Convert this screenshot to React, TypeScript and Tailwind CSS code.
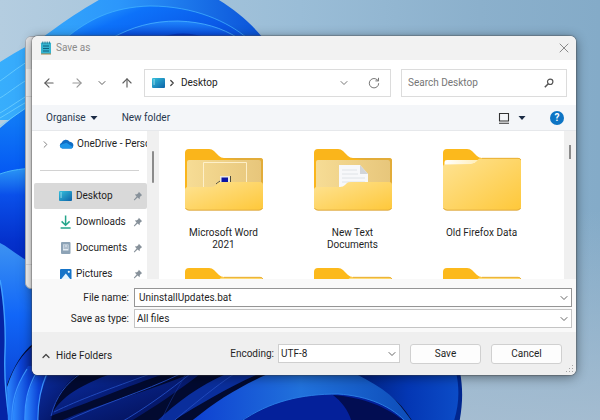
import {
  ArrowLeft,
  ArrowRight,
  ArrowUp,
  ChevronDown,
  ChevronRight,
  ChevronUp,
  X,
} from "lucide-react";
import { useState } from "react";

const Wallpaper = () => (
  <svg
    className="absolute inset-0 h-full w-full"
    viewBox="0 0 600 420"
    preserveAspectRatio="xMidYMid slice"
    aria-hidden="true"
  >
    <defs>
      <linearGradient id="sky" x1="0" y1="0" x2="1" y2="0">
        <stop offset="0" stopColor="#b4cde0" />
        <stop offset="0.5" stopColor="#9abdd7" />
        <stop offset="0.8" stopColor="#8bb0cc" />
        <stop offset="1" stopColor="#84abc8" />
      </linearGradient>
      <linearGradient id="haze" x1="0" y1="0" x2="0" y2="1">
        <stop offset="0.5" stopColor="#a9bfd2" stopOpacity="0" />
        <stop offset="1" stopColor="#a9bfd2" stopOpacity="0.85" />
      </linearGradient>
      <linearGradient id="petal" x1="0" y1="0" x2="1" y2="0">
        <stop offset="0" stopColor="#38aefc" />
        <stop offset="0.45" stopColor="#2c97fb" />
        <stop offset="1" stopColor="#0a52d8" />
      </linearGradient>
      <linearGradient id="petalInner" x1="0" y1="0" x2="1" y2="0.4">
        <stop offset="0" stopColor="#35b0ff" />
        <stop offset="0.4" stopColor="#0d72fa" />
        <stop offset="1" stopColor="#0a55e4" />
      </linearGradient>
      <linearGradient id="petalCore" x1="0" y1="0" x2="0" y2="1">
        <stop offset="0" stopColor="#1f85fb" />
        <stop offset="1" stopColor="#0443dd" />
      </linearGradient>
      <linearGradient id="deep" x1="0" y1="0" x2="0" y2="1">
        <stop offset="0" stopColor="#1485f8" />
        <stop offset="0.4" stopColor="#0457f3" />
        <stop offset="1" stopColor="#0238d8" />
      </linearGradient>
      <linearGradient id="fold" x1="0" y1="0" x2="0" y2="1">
        <stop offset="0" stopColor="#2b97f6" />
        <stop offset="0.22" stopColor="#0a50ea" />
        <stop offset="0.6" stopColor="#0431cc" />
        <stop offset="1" stopColor="#0222b4" />
      </linearGradient>
      <linearGradient id="stem" x1="0" y1="0" x2="0" y2="1">
        <stop offset="0" stopColor="#3c92f2" />
        <stop offset="0.4" stopColor="#1166f8" />
        <stop offset="1" stopColor="#0735c4" />
      </linearGradient>
      <linearGradient id="rib" x1="0" y1="0" x2="1" y2="0">
        <stop offset="0" stopColor="#2e8bff" />
        <stop offset="0.5" stopColor="#0c43d6" />
        <stop offset="1" stopColor="#06269a" />
      </linearGradient>
      <linearGradient id="ribDark" x1="0" y1="0" x2="1" y2="1">
        <stop offset="0" stopColor="#0b2fa6" />
        <stop offset="1" stopColor="#020b4a" />
      </linearGradient>
      <linearGradient id="wave" x1="0" y1="0" x2="1" y2="0">
        <stop offset="0" stopColor="#0d3ed0" />
        <stop offset="0.5" stopColor="#2172dc" />
        <stop offset="1" stopColor="#0d4cb8" />
      </linearGradient>
      <linearGradient id="edge" x1="0" y1="0" x2="1" y2="0">
        <stop offset="0" stopColor="#01207e" />
        <stop offset="0.5" stopColor="#0437b4" />
        <stop offset="1" stopColor="#0c4dc8" />
      </linearGradient>
    </defs>
    <rect width="600" height="420" fill="url(#sky)" />
    <rect width="600" height="420" fill="url(#haze)" />

    <path
      d="M0 62C20 49 36 42 50 32C68 19 84 8 106 -4H212C232 7 250 22 263 38V120H0Z"
      fill="url(#petal)"
    />
    <path
      d="M66 38C88 20 112 7 150 6C195 6 228 22 247 38Z"
      fill="url(#petalInner)"
      stroke="#45b8ff"
      strokeWidth="0.7"
    />
    <path
      d="M112 38C132 27 152 21 178 21C204 22 222 28 238 38Z"
      fill="url(#petalCore)"
      stroke="#4ab4ff"
      strokeWidth="0.8"
    />
    <path d="M158 38C174 32 192 32 207 38Z" fill="#0436c4" />

    <path d="M0 128C12 118 24 108 40 100V290H0Z" fill="url(#deep)" />
    <g fill="none" stroke="#6fd0ff" strokeWidth="0.8">
      <path d="M0 81C10 74 22 64 34 58" />
      <path d="M0 98C10 92 20 83 34 76" />
      <path d="M0 113C12 106 22 98 34 92" />
      <path d="M0 118C12 111 22 104 34 98" />
      <path d="M0 126C12 118 22 110 34 103" />
    </g>
    <path d="M0 174C8 171 18 169 34 168V290H0Z" fill="url(#fold)" />
    <path d="M0 174C8 171 18 169 34 168" fill="none" stroke="#46b5fb" />
    <path d="M0 243C10 248 18 256 36 266V424H0Z" fill="url(#stem)" />
    <path d="M0 280C4 300 6 330 5 352C4 376 6 400 10 424H0Z" fill="#0524a4" />
    <path
      d="M0 280C4 300 6 330 5 352C4 376 6 400 10 424"
      fill="none"
      stroke="#3fa0ff"
      strokeWidth="1.4"
    />

    <path d="M7 385C14 366 22 352 34 343V372H440V424H10Z" fill="#020a30" />
    <path d="M7 387C14 366 22 354 34 345V372L16 424H8Z" fill="url(#rib)" />
    <path d="M13 424C12 402 17 386 28 366H44L38 424Z" fill="url(#rib)" />
    <path d="M25 424C25 402 28 388 38 372H52C42 392 39 404 40 424Z" fill="url(#rib)" />
    <path d="M38 424C37 402 41 387 50 373H80C64 384 52 400 51 424Z" fill="url(#ribDark)" />
    <g fill="none" stroke="#3b94ff" strokeWidth="1.2">
      <path d="M12 424C11 402 16 386 27 369" />
      <path d="M25 424C24 402 28 388 36 373" />
      <path d="M38 424C37 402 41 387 47 373" />
    </g>

    <path d="M51 416C60 396 84 384 110 374H164C128 386 86 404 56 414Z" fill="url(#ribDark)" />
    <path d="M54 424C96 404 142 394 190 374H200C174 394 150 410 126 424Z" fill="url(#ribDark)" />
    <path d="M154 424C172 406 198 386 226 374H258C226 388 190 410 168 424Z" fill="#0a2e9c" />
    <g fill="none" stroke="#2049bd" strokeWidth="1">
      <path d="M51 416C56 396 66 384 80 374" />
      <path d="M54 412C78 400 112 388 150 374" />
      <path d="M60 424C100 404 144 392 180 374" />
      <path d="M118 424C146 408 170 390 190 374" />
      <path d="M160 424C168 404 178 388 186 374" opacity="0.4" />
      <path d="M170 424C194 404 216 386 234 374" />
    </g>
    <path d="M188 424C214 402 240 386 268 374H362C386 386 398 402 414 424Z" fill="url(#wave)" />
    <path d="M236 424C268 402 300 394 338 394C368 396 392 406 408 424Z" fill="#04209a" />
    <path d="M333 395C368 398 388 408 408 424H352C350 412 342 402 333 395Z" fill="#020d52" />
    <path
      d="M240 422C270 401 302 394 338 394C368 396 392 406 408 424"
      fill="none"
      stroke="#2b80e6"
      strokeWidth="0.9"
    />
    <path d="M356 372H458C462 388 461 404 457 424H414C402 402 384 388 356 374Z" fill="url(#edge)" />
    <path d="M456 372C460 390 459 406 453 424H459C463 404 463 388 460 372Z" fill="#01268e" />
  </svg>
);

const DesktopIcon = () => (
  <svg className="h-3 w-4 shrink-0" viewBox="0 0 16 12" aria-hidden="true">
    <defs>
      <linearGradient id="desk" x1="0" y1="0" x2="1" y2="1">
        <stop offset="0" stopColor="#35c1dc" />
        <stop offset="1" stopColor="#0c62a8" />
      </linearGradient>
    </defs>
    <rect x="1" y="1" width="13" height="10" rx="1" fill="url(#desk)" />
    <path d="M2.5 3h1.2M2.5 5h1.2M2.5 7h1.2" stroke="#d9f8ff" strokeWidth="1" />
  </svg>
);

const OneDriveIcon = () => (
  <svg className="h-3 w-4 shrink-0" viewBox="0 0 16 12" aria-hidden="true">
    <path
      d="M3.5 10.5A3 3 0 0 1 2.6 4.8A4.5 4.5 0 0 1 10.6 3.8A3.5 3.5 0 0 1 14 8.8A2 2 0 0 1 12.5 10.5Z"
      fill="#0f6cc4"
    />
    <path
      d="M3 10.4C1.2 9.8 .8 8.3 1.2 7L7.4 4.8L14 9A2 2 0 0 1 12.4 10.5H3.6Z"
      fill="#1d94e8"
    />
  </svg>
);

const DownloadsIcon = () => (
  <svg className="h-4 w-4 shrink-0" viewBox="0 0 16 16" aria-hidden="true">
    <path
      d="M7.6 1.5V11M3.6 7.4L7.6 11.2L11.6 7.4M2.6 14H12.6"
      fill="none"
      stroke="#24a58a"
      strokeWidth="1.5"
    />
  </svg>
);

const DocumentsIcon = () => (
  <svg className="h-4 w-4 shrink-0" viewBox="0 0 16 16" aria-hidden="true">
    <rect x="3" y="2" width="9.5" height="12" rx="1" fill="#8da3b6" />
    <path d="M5 4.5H10.5V10.5H5Z" fill="#e3ebf2" />
    <path d="M5.5 6H7.5M8.5 6H10M5.5 8H10" stroke="#6d879e" strokeWidth="0.9" />
  </svg>
);

const PicturesIcon = () => (
  <svg className="h-4 w-4 shrink-0" viewBox="0 0 16 16" aria-hidden="true">
    <rect x="2" y="3" width="11.5" height="11" rx="1" fill="#1674c8" />
    <path d="M2.5 14L7.8 7.6L13 14Z" fill="#e6f5ff" />
    <circle cx="10.8" cy="5.8" r="1.1" fill="#e6f5ff" />
  </svg>
);

const NotepadIcon = () => (
  <svg className="h-4 w-3 shrink-0" viewBox="0 0 12 16" aria-hidden="true">
    <rect x="1" y="2.5" width="10" height="11.5" rx="0.8" fill="#35b3cf" />
    <path d="M1 13.5H11V14.5H1Z" fill="#a58349" />
    <path d="M3 6H9M3 8.5H9M3 11H9" stroke="#0b5876" strokeWidth="0.9" />
    <path d="M2.8 1.5V3.8M5 1.5V3.8M7.2 1.5V3.8M9.4 1.5V3.8" stroke="#176f8b" strokeWidth="0.9" />
  </svg>
);

const PinIcon = () => (
  <svg className="h-2.5 w-2.5 shrink-0" viewBox="0 0 10 10" aria-hidden="true">
    <path
      d="M5.8 .8L9.2 4.2L8 4.8L6.8 6.2L6.6 8.2L4.6 6.4L1.4 9.4L.8 8.8L3.6 5.4L1.8 3.6L4 3.2L5.4 2Z"
      fill="#87919a"
    />
  </svg>
);

const RefreshIcon = () => (
  <svg className="h-3 w-3" viewBox="0 0 12 12" aria-hidden="true">
    <path
      d="M10.7 6.2A4.7 4.7 0 1 1 9 2.6L10.4 3.8M10.5 .8V3.9H7.4"
      fill="none"
      stroke="#777"
      strokeWidth="1"
    />
  </svg>
);

const SearchIcon = () => (
  <svg className="size-2.5 shrink-0" viewBox="0 0 10 10" aria-hidden="true">
    <circle cx="6.2" cy="3.8" r="2.7" fill="none" stroke="#555" strokeWidth="1.2" />
    <path d="M4.3 5.7L.8 9.2" stroke="#555" strokeWidth="1.5" />
  </svg>
);

type FolderKind = "image" | "text" | "closed";

const FolderIcon = ({ kind }: { kind: FolderKind }) => (
  <svg className="h-[62px] w-20" viewBox="0 0 80 62" aria-hidden="true">
    <defs>
      <linearGradient id="front" x1="0" y1="0" x2="1" y2="1">
        <stop offset="0" stopColor="#fee394" />
        <stop offset="1" stopColor="#fec83a" />
      </linearGradient>
      <linearGradient id="inside" x1="0" y1="0" x2="1" y2="0">
        <stop offset="0" stopColor="#f6dc95" />
        <stop offset="1" stopColor="#e7c67b" />
      </linearGradient>
      <linearGradient id="paper" x1="0" y1="0" x2="1" y2="0">
        <stop offset="0" stopColor="#ffffff" />
        <stop offset="1" stopColor="#ffeeb9" />
      </linearGradient>
    </defs>
    <path
      d="M1 4Q1 0 5 0H25Q28 0 30 2L35 7Q37 9 40 9H76Q79 9 79 12V50H1Z"
      fill={kind === "closed" ? "#fcb91c" : "#fab51b"}
    />
    {kind === "closed" ? (
      <>
        <path
          d="M1 18Q1 15 4 15H29Q32 15 34 13L36 10.5Q37 9.5 39 9.5H76Q79 9.5 79 12V58Q79 61 76 61H4Q1 61 1 58Z"
          fill="url(#front)"
        />
        <path d="M40 9.300H76Q78 9.300 79 11" fill="none" stroke="#e3aa35" strokeWidth="0.8" />
        <path d="M2.500 15.500V13Q2.500 11 5 11H36Q33 15 29 15Z" fill="url(#paper)" />
      </>
    ) : (
      <>
        <path d="M38 9H76Q79 9 79 12V40H60V12Z" fill="#e2ac39" />
        <path d="M3 13Q3 11 5 11H75Q77 11 77 13V40H3Z" fill="url(#inside)" />
        {kind === "image" && (
          <>
            <path d="M19.5 40V13.5H62.5V40" fill="none" stroke="#fff3cf" strokeWidth="0.9" />
            <path d="M36 27H46.5V34H36Z" fill="#ece9df" />
            <path d="M37.5 28.5H44V34H37.5Z" fill="#0b14a5" />
            <path d="M46.5 27V34M32 35L36 32" stroke="#4c4b3f" />
          </>
        )}
        {kind === "text" && (
          <>
            <path d="M26 16H47L55 25V40H26Z" fill="#f7f8fa" />
            <path d="M47 16V25H55Z" fill="#d2d5d9" />
            <path
              d="M29 21H44M29 25H45M29 29H52M29 33H52"
              stroke="#d9dde2"
              strokeWidth="0.8"
            />
          </>
        )}
        <path
          d="M1 41Q1 38 4 38H27Q30 38 32 36L34 34Q35 33 38 33H76Q79 33 79 36V58Q79 61 76 61H4Q1 61 1 58Z"
          fill="url(#front)"
        />
      </>
    )}
    <path
      d="M1.5 59Q2.5 61.2 5 61.2H75Q77.5 61.2 78.5 59"
      fill="none"
      stroke="#dfa83a"
      strokeWidth="1"
    />
  </svg>
);

const places = [
  { name: "Desktop", icon: DesktopIcon },
  { name: "Downloads", icon: DownloadsIcon },
  { name: "Documents", icon: DocumentsIcon },
  { name: "Pictures", icon: PicturesIcon },
];

const folders: { name: string; kind: FolderKind }[] = [
  { name: "Microsoft Word 2021", kind: "image" },
  { name: "New Text Documents", kind: "text" },
  { name: "Old Firefox Data", kind: "closed" },
  { name: "", kind: "closed" },
  { name: "", kind: "closed" },
  { name: "", kind: "closed" },
];

const Caret = () => (
  <svg className="h-1 w-2" viewBox="0 0 8 4" aria-hidden="true">
    <path d="M.5 0H7.5L4 4Z" fill="#1b2b45" />
  </svg>
);

const TitleBar = () => (
  <header className="flex h-6 items-center bg-[#f2f2f2] pl-2 pr-1">
    <NotepadIcon />
    <h1 className="ml-1 flex-1 text-[#8a8a8a]">Save as</h1>
    <button aria-label="Close" className="text-[#8a8a8a]">
      <X size={16} strokeWidth={1.5} />
    </button>
  </header>
);

const NavBar = () => (
  <div className="flex h-[45px] items-center pl-2.5 pr-[9px]">
    <nav className="flex w-[102px] shrink-0 items-center text-[#5f5f5f]">
      <button aria-label="Back">
        <ArrowLeft size={14} strokeWidth={2} />
      </button>
      <button aria-label="Forward" className="ml-3.5 text-[#999]">
        <ArrowRight size={14} strokeWidth={2} />
      </button>
      <button aria-label="Recent locations" className="ml-3">
        <ChevronDown size={12} strokeWidth={2} />
      </button>
      <button aria-label="Up" className="ml-3">
        <ArrowUp size={14} strokeWidth={2} />
      </button>
    </nav>
    <div className="flex h-7 min-w-0 flex-1 items-center border border-[#dcdcdc] pl-1.5 pr-2">
      <DesktopIcon />
      <ChevronRight size={10} strokeWidth={3} className="text-[#444]" />
      <span className="ml-1 flex-1 text-[#222]">Desktop</span>
      <button aria-label="Previous locations" className="text-[#777]">
        <ChevronDown size={12} strokeWidth={2} />
      </button>
      <button aria-label="Refresh" className="ml-[18px] mr-0.5">
        <RefreshIcon />
      </button>
    </div>
    <label className="ml-2.5 flex h-7 w-[166px] shrink-0 items-center border border-[#dcdcdc] pl-1.5 pr-3">
      <input
        type="search"
        aria-label="Search Desktop"
        placeholder="Search Desktop"
        className="w-full min-w-0 outline-none placeholder:text-[#767676]"
      />
      <SearchIcon />
    </label>
  </div>
);

const Toolbar = () => (
  <div className="flex h-[26px] items-center border-b border-[#e6e8eb] bg-[#f4f6f9] pl-3.5 pr-3 text-[#27364f]">
    <button className="flex items-center gap-1">
      Organise <Caret />
    </button>
    <button className="ml-6 flex-1 text-left">New folder</button>
    <button aria-label="View" className="flex items-center gap-2">
      <svg className="h-3 w-3" viewBox="0 0 12 12" aria-hidden="true">
        <path
          d="M1.5 1.5H10.5V9H1.5ZM1 11.2H11"
          fill="none"
          stroke="#333"
          strokeWidth="1.1"
        />
      </svg>
      <Caret />
    </button>
    <button
      aria-label="Help"
      className="ml-6 flex size-3.5 items-center justify-center rounded-full bg-[#0d74c4] font-bold text-white"
    >
      ?
    </button>
  </div>
);

const Sidebar = () => (
  <aside className="flex w-[127px] shrink-0">
    <div className="w-[115px] overflow-hidden pl-0.5">
      <button className="flex h-[26px] w-full items-center whitespace-nowrap pl-1.5">
        <ChevronRight size={11} strokeWidth={2} className="mr-2 shrink-0 text-[#777]" />
        <OneDriveIcon />
        <span className="ml-0.5">OneDrive - Personal</span>
      </button>
      <div className="flex h-[26px] items-center pl-1.5 pr-2">
        <hr className="w-full border-[#d2d2d2]" />
      </div>
      {places.map(({ name, icon: Icon }) => (
        <button
          key={name}
          className={`flex h-[26px] w-full items-center rounded-xs pl-6 pr-1 ${
            name === "Desktop" ? "bg-[#d9d9d9]" : ""
          }`}
        >
          <Icon />
          <span className="ml-0.5 flex-1 text-left">{name}</span>
          <PinIcon />
        </button>
      ))}
    </div>
    <div className="flex flex-1 justify-center bg-[#f0f0f0] pt-5">
      <div className="h-8 w-0.5 rounded bg-[#8b8b8b]" />
    </div>
  </aside>
);

const FileGrid = () => (
  <main className="flex min-w-0 flex-1">
    <ul className="grid flex-1 grid-cols-3 content-start gap-y-[17px] pr-[18px] pt-[18px]">
      {folders.map(({ name, kind }, i) => (
        <li key={i} className="flex flex-col items-center gap-4">
          <FolderIcon kind={kind} />
          <span className="h-6 w-20 text-center leading-3">{name}</span>
        </li>
      ))}
    </ul>
    <div className="flex w-3 justify-center bg-[#f0f0f0] pt-3.5">
      <div className="h-3.5 w-0.5 bg-[#8b8b8b]" />
    </div>
  </main>
);

const SelectChevron = () => (
  <ChevronDown
    size={12}
    strokeWidth={2}
    className="pointer-events-none absolute right-0.5 top-1/2 -translate-y-1/2 text-[#666]"
  />
);

const App = () => {
  const [fileName, setFileName] = useState("UninstallUpdates.bat");

  return (
    <div className="relative min-h-screen overflow-hidden pb-11 pl-8 pr-6 pt-9 font-[Roboto,sans-serif] text-[10px] leading-3 text-[#1f1f1f]">
      <Wallpaper />
      <div className="absolute bottom-[131px] left-[25px] right-8 top-9 flex flex-col overflow-hidden rounded-md border border-[#a9afb8] bg-[#f5f5f5] shadow-lg">
        <div className="h-8 bg-[#e3e4e6]" />
        <div className="h-7 border-b border-[#dedede]" />
        <div className="flex-1" />
        <div className="h-6 border-t border-[#dedede]" />
      </div>

      <section className="relative overflow-hidden rounded-md bg-white shadow-[0_2px_12px_rgba(0,0,0,0.45),0_0_1px_1px_rgba(90,90,90,0.4)]">
        <TitleBar />
        <NavBar />
        <Toolbar />
        <div className="flex h-[148px] overflow-hidden">
          <Sidebar />
          <FileGrid />
        </div>

        <div className="grid grid-cols-[97px_1fr] items-center gap-x-[5px] gap-y-0.5 bg-[#f9f9f9] pb-1 pr-1 pt-[9px]">
          <label htmlFor="file-name" className="text-right">
            File name:
          </label>
          <div className="relative">
            <input
              id="file-name"
              value={fileName}
              onChange={(e) => setFileName(e.target.value)}
              className="block h-[19px] w-full border border-[#959595] bg-white px-1 outline-none"
            />
            <SelectChevron />
          </div>
          <label htmlFor="file-type" className="text-right">
            Save as type:
          </label>
          <div className="relative">
            <select
              id="file-type"
              className="block h-[19px] w-full appearance-none border border-[#c4c4c4] bg-white px-0.5"
            >
              <option>All files</option>
            </select>
            <SelectChevron />
          </div>
        </div>

        <footer className="flex h-[43px] items-center bg-[#efefef] pl-2 pr-3.5">
          <button className="mt-1 flex items-center gap-1">
            <ChevronUp size={12} strokeWidth={2.5} className="text-[#444]" />
            Hide Folders
          </button>
          <label htmlFor="encoding" className="ml-auto">
            Encoding:
          </label>
          <div className="relative ml-1 w-[122px]">
            <select
              id="encoding"
              className="block h-[19px] w-full appearance-none border border-[#cfcfcf] bg-white px-0.5"
            >
              <option>UTF-8</option>
            </select>
            <SelectChevron />
          </div>
          <button className="ml-2.5 h-5 w-[71px] rounded-[3px] border border-[#d0d0d0] bg-[#fdfdfd]">
            Save
          </button>
          <button className="ml-2.5 h-5 w-[71px] rounded-[3px] border border-[#d0d0d0] bg-[#fdfdfd]">
            Cancel
          </button>
        </footer>
        <svg className="absolute bottom-0.5 right-0.5 size-2" viewBox="0 0 8 8" aria-hidden="true">
          <path
            d="M6 0h1v1H6zM6 3h1v1H6zM3 3h1v1H3zM6 6h1v1H6zM3 6h1v1H3zM0 6h1v1H0z"
            fill="#a5a5a5"
          />
        </svg>
      </section>
    </div>
  );
};

export default App;
